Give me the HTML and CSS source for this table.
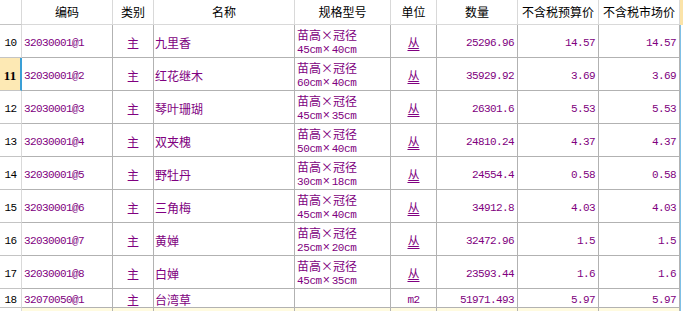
FILE: index.html
```html
<!DOCTYPE html>
<html lang="zh">
<head>
<meta charset="utf-8">
<title>材料表</title>
<link rel="stylesheet" href="styles.css">
</head>
<body>
<div class="sheet">
  <div class="row head">
    <div class="c n"></div>
    <div class="c">编码</div>
    <div class="c">类别</div>
    <div class="c">名称</div>
    <div class="c">规格型号</div>
    <div class="c">单位</div>
    <div class="c">数量</div>
    <div class="c">不含税预算价</div>
    <div class="c">不含税市场价</div>
    <div class="c edge"></div>
  </div>

  <div class="row">
    <div class="c n">10</div>
    <div class="c code">32030001@1</div>
    <div class="c mid">主</div>
    <div class="c name">九里香</div>
    <div class="c spec"><div class="l1">苗高×冠径</div><div class="l2">45cm<span class="x">×</span>40cm</div></div>
    <div class="c mid"><span class="u">丛</span></div>
    <div class="c val">25296.96</div>
    <div class="c val">14.57</div>
    <div class="c val">14.57</div>
    <div class="c edge"></div>
  </div>

  <div class="row">
    <div class="c n sel">11</div>
    <div class="c code">32030001@2</div>
    <div class="c mid">主</div>
    <div class="c name">红花继木</div>
    <div class="c spec"><div class="l1">苗高×冠径</div><div class="l2">60cm<span class="x">×</span>40cm</div></div>
    <div class="c mid"><span class="u">丛</span></div>
    <div class="c val">35929.92</div>
    <div class="c val">3.69</div>
    <div class="c val">3.69</div>
    <div class="c edge"></div>
  </div>

  <div class="row">
    <div class="c n">12</div>
    <div class="c code">32030001@3</div>
    <div class="c mid">主</div>
    <div class="c name">琴叶珊瑚</div>
    <div class="c spec"><div class="l1">苗高×冠径</div><div class="l2">45cm<span class="x">×</span>35cm</div></div>
    <div class="c mid"><span class="u">丛</span></div>
    <div class="c val">26301.6</div>
    <div class="c val">5.53</div>
    <div class="c val">5.53</div>
    <div class="c edge"></div>
  </div>

  <div class="row">
    <div class="c n">13</div>
    <div class="c code">32030001@4</div>
    <div class="c mid">主</div>
    <div class="c name">双夹槐</div>
    <div class="c spec"><div class="l1">苗高×冠径</div><div class="l2">50cm<span class="x">×</span>40cm</div></div>
    <div class="c mid"><span class="u">丛</span></div>
    <div class="c val">24810.24</div>
    <div class="c val">4.37</div>
    <div class="c val">4.37</div>
    <div class="c edge"></div>
  </div>

  <div class="row">
    <div class="c n">14</div>
    <div class="c code">32030001@5</div>
    <div class="c mid">主</div>
    <div class="c name">野牡丹</div>
    <div class="c spec"><div class="l1">苗高×冠径</div><div class="l2">30cm<span class="x">×</span>18cm</div></div>
    <div class="c mid"><span class="u">丛</span></div>
    <div class="c val">24554.4</div>
    <div class="c val">0.58</div>
    <div class="c val">0.58</div>
    <div class="c edge"></div>
  </div>

  <div class="row">
    <div class="c n">15</div>
    <div class="c code">32030001@6</div>
    <div class="c mid">主</div>
    <div class="c name">三角梅</div>
    <div class="c spec"><div class="l1">苗高×冠径</div><div class="l2">45cm<span class="x">×</span>40cm</div></div>
    <div class="c mid"><span class="u">丛</span></div>
    <div class="c val">34912.8</div>
    <div class="c val">4.03</div>
    <div class="c val">4.03</div>
    <div class="c edge"></div>
  </div>

  <div class="row">
    <div class="c n">16</div>
    <div class="c code">32030001@7</div>
    <div class="c mid">主</div>
    <div class="c name">黄婵</div>
    <div class="c spec"><div class="l1">苗高×冠径</div><div class="l2">25cm<span class="x">×</span>20cm</div></div>
    <div class="c mid"><span class="u">丛</span></div>
    <div class="c val">32472.96</div>
    <div class="c val">1.5</div>
    <div class="c val">1.5</div>
    <div class="c edge"></div>
  </div>

  <div class="row">
    <div class="c n">17</div>
    <div class="c code">32030001@8</div>
    <div class="c mid">主</div>
    <div class="c name">白婵</div>
    <div class="c spec"><div class="l1">苗高×冠径</div><div class="l2">45cm<span class="x">×</span>35cm</div></div>
    <div class="c mid"><span class="u">丛</span></div>
    <div class="c val">23593.44</div>
    <div class="c val">1.6</div>
    <div class="c val">1.6</div>
    <div class="c edge"></div>
  </div>

  <div class="row short">
    <div class="c n">18</div>
    <div class="c code">32070050@1</div>
    <div class="c mid">主</div>
    <div class="c name">台湾草</div>
    <div class="c spec"></div>
    <div class="c mid mono">m2</div>
    <div class="c val">51971.493</div>
    <div class="c val">5.97</div>
    <div class="c val">5.97</div>
    <div class="c edge"></div>
  </div>

  <div class="row tail">
    <div class="c n"></div>
    <div class="c"></div>
    <div class="c"></div>
    <div class="c"></div>
    <div class="c"></div>
    <div class="c"></div>
    <div class="c"></div>
    <div class="c"></div>
    <div class="c"></div>
    <div class="c edge"></div>
  </div>
</div>
</body>
</html>
```

FILE: styles.css
```css
html, body {
  margin: 0;
  padding: 0;
  background: #ffffff;
}

body {
  width: 683px;
  height: 311px;
  overflow: hidden;
  font-family: "Noto Sans CJK SC", sans-serif;
  font-size: 12px;
  line-height: 14px;
}

.sheet {
  display: flex;
  flex-direction: column;
}

.row {
  display: grid;
  grid-template-columns: 22px 91px 41px 141px 96px 46px 81px 81px 81px 1fr;
  height: 33px;
}

.row.head { height: 25px; }
.row.short { height: 19px; }
.row.tail { height: 12px; }

.c {
  box-sizing: border-box;
  border-right: 1px solid #b2b2b2;
  border-bottom: 1px solid #b2b2b2;
  display: flex;
  align-items: center;
  overflow: hidden;
  white-space: nowrap;
  color: #800080;
  padding-top: 3px;
}

.head .c {
  color: #000000;
  border-color: #d9d9d9;
  justify-content: center;
  padding-top: 0;
}

.c.n {
  color: #000000;
  justify-content: center;
  border-right-color: #d9d9d9;
  border-bottom-color: #c4c4c4;
  font-family: "Liberation Mono", monospace;
  font-size: 11px;
  letter-spacing: -0.6px;
}

.c.n.sel {
  background: #fde9b4;
  border-right: 2px solid #3a9fd6;
  font-weight: bold;
  font-family: "Liberation Serif", serif;
  font-size: 13px;
  letter-spacing: 0;
}

.code {
  padding-left: 2px;
  font-family: "Liberation Mono", monospace;
  font-size: 11px;
  letter-spacing: -0.6px;
}

.mid {
  justify-content: center;
}

.mono {
  font-family: "Liberation Mono", monospace;
  font-size: 11px;
  letter-spacing: -0.6px;
}

.name {
  padding-left: 1px;
}

.spec {
  flex-direction: column;
  align-items: flex-start;
  justify-content: flex-start;
  padding-left: 2px;
  padding-top: 1px;
}

.spec .l1 {
  height: 17px;
  line-height: 17px;
}

.spec .l2 {
  height: 13px;
  line-height: 13px;
  margin-top: 1px;
  font-family: "Liberation Mono", monospace;
  font-size: 11px;
  letter-spacing: -0.4px;
}

.spec .x {
  font-size: 12px;
  margin: 0 2px 0 1px;
}

.u {
  text-decoration: underline;
  text-underline-offset: 2px;
}

.val {
  justify-content: flex-end;
  padding-right: 3px;
  font-family: "Liberation Mono", monospace;
  font-size: 11px;
  letter-spacing: -0.6px;
}

.c.edge {
  border-right: none;
  border-bottom: none;
  border-left: 1px solid #7fc0e6;
}

.head .c.edge {
  background: #fbe3a8;
  border-left: none;
}

.tail .c {
  background: #fffbe0;
}

.tail .c.n {
  background: #ffffff;
}

.tail .c.edge {
  background: #ffffff;
}
```
